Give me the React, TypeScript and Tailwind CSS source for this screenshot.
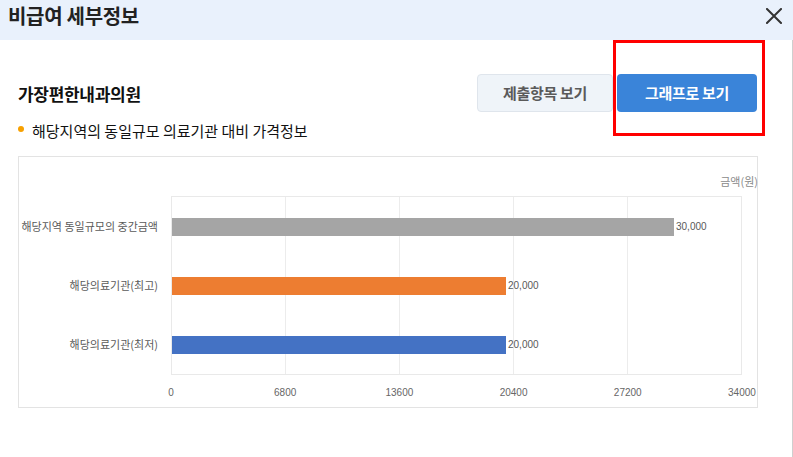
import React from "react";

const KR = '"Noto Sans CJK KR", "Noto Sans", sans-serif';
const NUM = '"Liberation Sans", "Noto Sans CJK KR", sans-serif';

const MAX = 34000;
const INNER = 570;
const bars = [
  { label: "해당지역 동일규모의 중간금액", value: 30000, color: "bg-[#a5a5a5]" },
  { label: "해당의료기관(최고)", value: 20000, color: "bg-[#ed7d31]" },
  { label: "해당의료기관(최저)", value: 20000, color: "bg-[#4472c4]" },
];
const ticks = ["0", "6800", "13600", "20400", "27200", "34000"];

export default function App() {
  return (
    <div className="w-[793px] h-[457px] bg-white overflow-hidden flex flex-col" style={{ fontFamily: KR }}>
      <div className="h-10 shrink-0 bg-[#e9f1fc] flex items-center justify-between pl-2 pr-[11px]">
        <div className="text-[20px] font-bold text-[#222] leading-none -mt-2 tracking-[-0.3px]">비급여 세부정보</div>
        <svg width="16" height="16" viewBox="0 0 16 16" className="-mt-2">
          <path d="M1 1 L15 15 M15 1 L1 15" stroke="#333" strokeWidth="2" strokeLinecap="square" />
        </svg>
      </div>
      <div className="relative flex-1 border-r border-[#cfcfcf] pl-[18px] pr-[35px]">
        <div className="mt-[34px] flex items-center justify-between h-[38px]">
          <div className="text-[17px] font-bold text-[#111] leading-none tracking-[-0.3px]">가장편한내과의원</div>
          <div className="flex gap-1">
            <button className="w-[136px] h-[38px] rounded-[4px] bg-[#eff4f9] border border-[#dfe5ec] text-[15px] font-bold text-[#5a5a5a] tracking-[-0.3px]">
              제출항목 보기
            </button>
            <button className="w-[140px] h-[38px] rounded-[4px] bg-[#3a84d9] text-[15px] font-bold text-white tracking-[-0.3px]">
              그래프로 보기
            </button>
          </div>
        </div>
        <div className="mt-2 h-5 flex items-center gap-[8px]">
          <span className="w-[6px] h-[6px] rounded-full bg-[#f7a000] -mt-[2px]" />
          <span className="text-[15px] text-[#111] leading-none">해당지역의 동일규모 의료기관 대비 가격정보</span>
        </div>
        <div className="mt-4 w-[740px] h-[252px] border border-[#e3e3e3] flex flex-col">
          <div className="h-[39px] flex justify-end items-start pt-[18px]">
            <span className="text-[11px] text-[#8a8a8a] leading-[13px] -mr-[1px]">금액(원)</span>
          </div>
          <div className="flex">
            <div className="w-[152px] pt-px flex flex-col">
              {bars.map((b) => (
                <div key={b.label} className="h-[59px] flex items-center justify-end pr-[13px]">
                  <span className="text-[11px] text-[#5a5a5a] leading-none">{b.label}</span>
                </div>
              ))}
            </div>
            <div className="relative w-[571px] h-[179px] border border-[#e9e9e9]">
              <div className="absolute inset-0 grid grid-cols-[113px_114px_114px_114px_114px]">
                <div />
                <div className="border-l border-[#ececec]" />
                <div className="border-l border-[#ececec]" />
                <div className="border-l border-[#ececec]" />
                <div className="border-l border-[#ececec]" />
              </div>
              <div className="relative flex flex-col">
                {bars.map((b) => (
                  <div key={b.label} className="h-[59px] flex items-center">
                    <div
                      className={`h-[18px] ${b.color}`}
                      style={{ width: Math.round((b.value / MAX) * INNER) - 1 }}
                    />
                    <span className="ml-[2px] text-[10px] text-[#595959] leading-none" style={{ fontFamily: NUM }}>
                      {b.value.toLocaleString("en-US")}
                    </span>
                  </div>
                ))}
              </div>
            </div>
          </div>
          <div className="pl-[152px] mt-[13px] w-[723px] flex justify-between">
            {ticks.map((t) => (
              <div key={t} className="w-0 flex justify-center">
                <span className="text-[10px] text-[#666] leading-none whitespace-nowrap" style={{ fontFamily: NUM }}>
                  {t}
                </span>
              </div>
            ))}
          </div>
        </div>
        <div className="absolute left-[613px] top-0 w-[152px] h-[96px] border-[3px] border-[#ff0000] pointer-events-none" />
      </div>
    </div>
  );
}
